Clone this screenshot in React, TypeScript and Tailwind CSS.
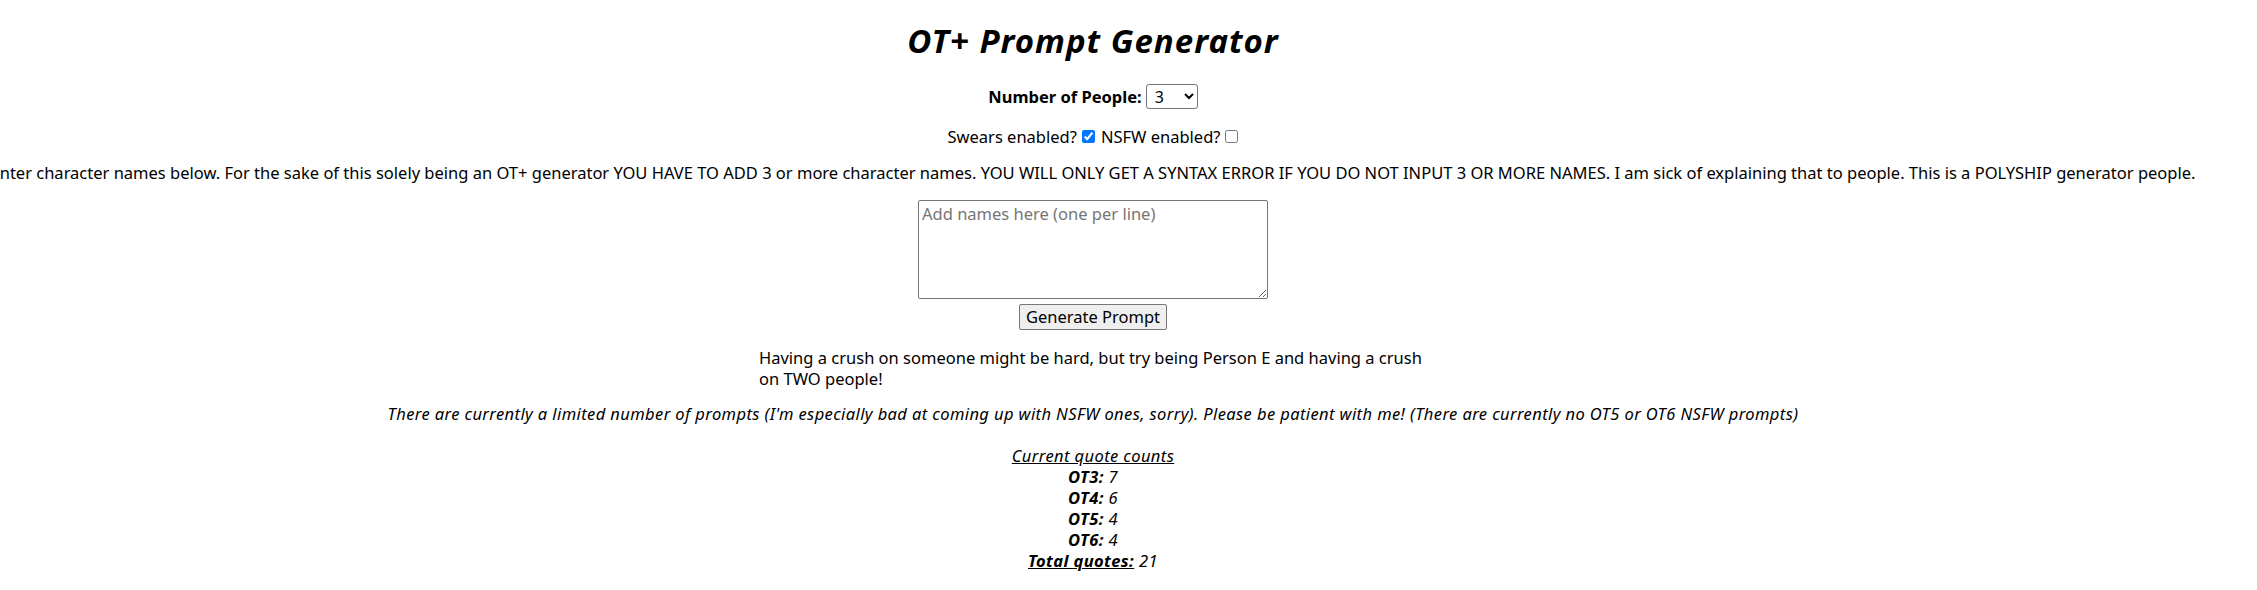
import React from "react";

export default function App() {
  const counts: [string, string][] = [
    ["OT3:", "7"],
    ["OT4:", "6"],
    ["OT5:", "4"],
    ["OT6:", "4"],
  ];
  return (
    <div
      className="w-[2186px] flex flex-col items-center text-[16.5px] leading-[21px] text-black bg-white"
      style={{ fontFamily: '"Noto Sans", "Open Sans", sans-serif' }}
    >
      <h1 className="mt-[20px] text-[33px] tracking-[1px] leading-[42px] font-bold italic whitespace-nowrap">
        OT+ Prompt Generator
      </h1>
      <div className="mt-[22px] h-[25px] flex items-center whitespace-nowrap">
        <span className="font-bold">Number of People:</span>
        <select
          defaultValue="3"
          className="ml-[4px] w-[52px] h-[25px] border border-[#767676] rounded-[3px] bg-white pl-[4px] text-[16px]"
        >
          <option value="3">3</option>
          <option value="4">4</option>
          <option value="5">5</option>
          <option value="6">6</option>
        </select>
      </div>
      <div className="mt-[17px] h-[21px] flex items-center whitespace-nowrap">
        <span>Swears enabled?</span>
        <input type="checkbox" defaultChecked className="ml-[5px] mr-[6px] w-[13px] h-[13px] accent-[#0075ff]" />
        <span>NSFW enabled?</span>
        <input type="checkbox" className="ml-[5px] w-[13px] h-[13px]" />
      </div>
      <p className="mt-[15px] whitespace-nowrap">
        Enter character names below. For the sake of this solely being an OT+ generator YOU HAVE TO ADD 3 or more
        character names. YOU WILL ONLY GET A SYNTAX ERROR IF YOU DO NOT INPUT 3 OR MORE NAMES. I am sick of
        explaining that to people. This is a POLYSHIP generator people.
      </p>
      <textarea
        placeholder="Add names here (one per line)"
        className="mt-[17px] w-[350px] h-[99px] border border-[#767676] rounded-[2px] bg-white px-[3px] py-[2px] text-[16.5px] leading-[21px] placeholder:text-[#757575] resize"
      />
      <button className="mt-[5px] w-[148px] h-[26px] border border-[#767676] rounded-[2px] bg-[#efefef] text-[16.5px] leading-[20px] whitespace-nowrap">
        Generate Prompt
      </button>
      <p className="mt-[17px] w-[668px] text-left">
        Having a crush on someone might be hard, but try being Person E and having a crush on TWO people!
      </p>
      <p className="mt-[14px] italic tracking-[0.4px] whitespace-nowrap">
        There are currently a limited number of prompts (I'm especially bad at coming up with NSFW ones, sorry).
        Please be patient with me! (There are currently no OT5 or OT6 NSFW prompts)
      </p>
      <div className="mt-[21px] flex flex-col items-center italic tracking-[0.4px]">
        <span className="underline">Current quote counts</span>
        {counts.map(([k, v]) => (
          <span key={k}>
            <b>{k}</b> {v}
          </span>
        ))}
        <span>
          <b className="underline">Total quotes:</b> 21
        </span>
      </div>
    </div>
  );
}
